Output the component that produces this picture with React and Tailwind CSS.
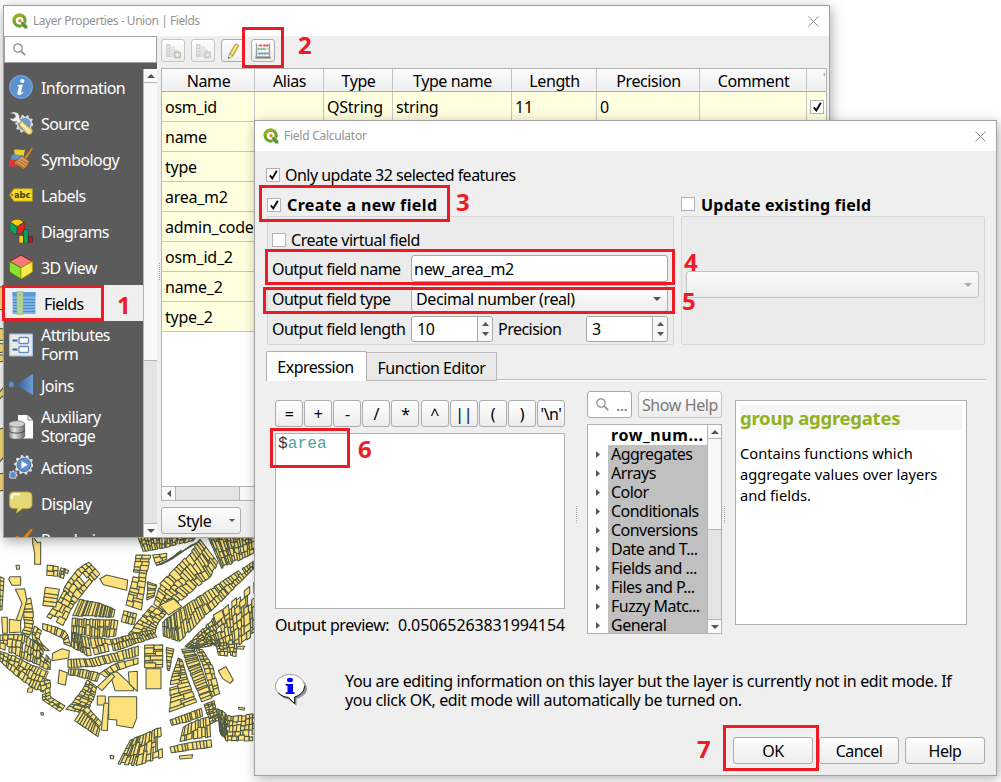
import React from "react";

/* ---------- Map canvas ---------- */

// Each band is a list of cross sections [ax, ay, bx, by]; it is cut into `n` lots and `rows` rows.
const BANDS = [
  { n: 20, rows: 3, s: [[412, 105, 430, 155], [500, 100, 500, 142], [600, 90, 580, 122]] },
  { n: 12, rows: 2, s: [[408, 165, 452, 166], [398, 230, 438, 236], [378, 315, 424, 330]] },
  { n: 9, rows: 2, s: [[458, 165, 500, 160], [470, 200, 500, 185], [520, 175, 545, 150], [575, 135, 600, 125]] },
  { n: 6, rows: 1, s: [[442, 245, 470, 255], [440, 300, 462, 290]] },
  { n: 30, rows: 3, s: [[600, 118, 655, 190], [575, 150, 628, 235], [530, 200, 590, 262], [480, 250, 545, 300], [462, 310, 500, 338], [425, 350, 470, 378], [385, 402, 465, 412]] },
  { n: 17, rows: 4, s: [[620, 100, 665, 205], [690, 100, 710, 185], [775, 100, 775, 152]] },
  { n: 40, rows: 2, s: [[488, 365, 490, 408], [530, 335, 540, 425], [580, 300, 605, 358], [640, 262, 668, 300], [700, 222, 722, 245], [768, 180, 768, 198]] },
  { n: 22, rows: 6, s: [[555, 440, 585, 446], [600, 395, 640, 436], [640, 355, 668, 450], [700, 300, 710, 440], [770, 240, 770, 400]] },
  { n: 6, rows: 3, s: [[650, 440, 655, 465], [710, 430, 708, 470]] },
  { n: 13, rows: 3, s: [[265, 185, 300, 222], [235, 205, 272, 252], [200, 250, 240, 290], [172, 305, 215, 325], [140, 350, 190, 377]] },
  { n: 2, rows: 2, s: [[142, 195, 140, 228], [175, 200, 172, 230]] },
  { n: 3, rows: 2, s: [[183, 202, 176, 230], [207, 210, 196, 238]] },
  { n: 1, rows: 5, s: [[136, 262, 126, 334], [178, 268, 164, 338]] },
  { n: 18, rows: 1, s: [[240, 298, 218, 348], [300, 310, 290, 350], [345, 328, 340, 352]] },
  { n: 17, rows: 2, s: [[217, 354, 215, 398], [280, 357, 278, 410], [354, 360, 346, 412]] },
  { n: 4, rows: 2, s: [[372, 332, 364, 365], [410, 342, 402, 375]] },
  { n: 32, rows: 2, s: [[215, 396, 214, 440], [250, 410, 262, 468], [340, 418, 348, 452], [400, 400, 412, 430], [455, 390, 470, 410]] },
  { n: 22, rows: 1, s: [[204, 478, 204, 502], [270, 476, 280, 500], [340, 460, 350, 485], [415, 438, 415, 468]] },
  { n: 12, rows: 1, s: [[206, 506, 205, 524], [250, 508, 246, 532], [300, 520, 290, 546]] },
  { n: 8, rows: 1, s: [[300, 520, 318, 532], [340, 492, 350, 512], [414, 474, 414, 492]] },
  { n: 10, rows: 1, s: [[128, 370, 128, 388], [170, 382, 165, 404], [200, 395, 190, 415], [214, 440, 192, 432]] },
  { n: 10, rows: 1, s: [[72, 300, 92, 294], [70, 340, 100, 340], [74, 380, 100, 385], [62, 405, 85, 412]] },
  { n: 16, rows: 3, s: [[0, 405, 0, 445], [70, 402, 60, 470], [110, 430, 100, 490], [152, 480, 150, 512]] },
  { n: 5, rows: 2, s: [[104, 378, 124, 392], [92, 412, 118, 425], [128, 450, 148, 452]] },
  { n: 15, rows: 3, s: [[0, 452, 0, 485], [60, 475, 40, 520], [110, 500, 84, 555], [155, 520, 128, 580]] },
  { n: 9, rows: 2, s: [[120, 545, 152, 540], [128, 600, 150, 590], [180, 635, 195, 618]] },
  { n: 11, rows: 3, s: [[262, 540, 290, 560], [235, 585, 280, 605], [198, 628, 255, 640]] },
  { n: 9, rows: 1, s: [[245, 630, 224, 662], [300, 685, 294, 710]] },
  { n: 5, rows: 1, s: [[262, 620, 250, 630], [305, 668, 298, 680]] },
  { n: 2, rows: 6, s: [[434, 436, 434, 503], [488, 433, 488, 503]] },
  { n: 8, rows: 1, s: [[498, 442, 522, 448], [500, 480, 514, 482], [502, 510, 508, 512]] },
  { n: 22, rows: 1, s: [[545, 448, 582, 445], [570, 520, 605, 505], [605, 605, 636, 594]] },
  { n: 11, rows: 2, s: [[586, 444, 608, 450], [612, 505, 638, 498], [636, 590, 660, 580]] },
  { n: 15, rows: 2, s: [[535, 474, 546, 480], [510, 545, 562, 535], [508, 636, 590, 606]] },
  { n: 12, rows: 1, s: [[510, 660, 515, 676], [560, 642, 565, 665], [604, 625, 608, 648]] },
  { n: 9, rows: 2, s: [[550, 680, 540, 725], [590, 660, 590, 715], [628, 650, 632, 712]] },
  { n: 11, rows: 1, s: [[510, 740, 514, 758], [570, 728, 574, 750], [633, 718, 635, 742]] },
  { n: 9, rows: 3, s: [[612, 614, 642, 602], [632, 672, 656, 660]] },
  { n: 14, rows: 5, s: [[652, 622, 660, 700], [690, 650, 680, 724], [770, 640, 770, 722]] },
  { n: 12, rows: 3, s: [[392, 718, 354, 792], [430, 704, 410, 797], [482, 680, 488, 772]] },
  { n: 1, rows: 7, s: [[0, 230, 0, 330], [12, 235, 6, 330]] },
];

const BUILDINGS = [
  "98,108 112,128 122,126 122,193 104,193 104,160 98,130",
  "48,196 58,196 58,208 50,208",
  "30,230 62,230 62,256 36,256 26,238",
  "46,268 74,266 80,300 70,340 60,370 48,362 66,310",
  "5,352 22,352 22,400 8,400",
  "28,358 62,362 62,396 28,398",
  "300,236 320,225 383,240 380,271 310,254",
  "480,315 520,296 545,320 505,345",
  "158,460 186,446 208,452 206,474 156,482",
  "178,510 202,518 196,556 174,550",
  "438,506 483,506 483,566 438,566",
  "292,588 316,588 316,615 292,615",
  "326,590 410,590 410,655 398,684 350,676 350,660 326,658",
  "312,610 326,610 322,692 304,690",
  "330,520 350,515 400,560 400,572 345,572",
  "292,560 335,520 344,530 306,572",
  "385,516 412,514 412,574 388,552",
  "655,512 678,500 700,540 690,550 668,536",
  "330,766 342,768 340,776 332,776",
  "538,768 578,764 576,774 540,777",
  "716,622 734,624 732,630 716,628",
  "710,440 734,438 730,448 712,446",
  "122,638 130,638 130,645 124,645",
  "84,565 100,562 96,577 82,576",
  "640,345 665,330 672,350 648,370",
  "-4,-640 12,-638 12,-572 -4,-570",
  "-4,-515 12,-513 12,-480 -4,-478",
  "-4,-470 12,-468 12,-444 -4,-442",
  "-4,-436 12,-434 12,-416 -4,-414",
  "-4,-320 12,-340 12,-316 -4,-300",
  "-4,-212 12,-216 12,-130 -4,-110",
  "-4,-78 12,-80 12,-30 -4,-26",
];

function lotsOf({ n, rows, s }, seed) {
  const at = (t) => {
    const p = Math.min(t * (s.length - 1), s.length - 1.0001);
    const i = Math.floor(p);
    const f = p - i;
    return s[i].map((v, k) => v + (s[i + 1][k] - v) * f);
  };
  const jitter = (a, b) => {
    const v = Math.sin(a * 127.1 + b * 311.7 + seed * 74.7) * 43758.5453;
    return v - Math.floor(v) - 0.5;
  };
  const out = [];
  for (let r = 0; r < rows; r++) {
    for (let i = 0; i < n; i++) {
      if (rows > 1 && jitter(i + 9, r + 5) > 0.46) continue;
      const t0 = i === 0 ? 0 : (i + jitter(i, r) * 0.75) / n;
      const t1 = i === n - 1 ? 1 : (i + 1 + jitter(i + 1, r) * 0.75) / n;
      const a = at(t0);
      const b = at(t1);
      const u0 = r === 0 ? Math.max(0, jitter(i, 30) * 0.12) : (r + jitter(i, r + 40) * 0.6) / rows;
      const u1 = r === rows - 1 ? 1 - Math.max(0, jitter(i, 31) * 0.16) : (r + 1 + jitter(i, r + 41) * 0.6) / rows;
      const pt = (q, u) => `${(q[0] + (q[2] - q[0]) * u).toFixed(1)},${(q[1] + (q[3] - q[1]) * u).toFixed(1)}`;
      out.push(`${pt(a, u0)} ${pt(b, u0)} ${pt(b, u1)} ${pt(a, u1)}`);
    }
  }
  return out;
}

function MapCanvas() {
  return (
    <svg className="block w-[260px] h-[502px]" viewBox="0 -660 780 1506" fill="#ffe17b" stroke="#4c5844" strokeWidth="3.2" strokeLinejoin="round">
      {BANDS.map((b, k) => lotsOf(b, k).map((p, i) => <polygon key={k + "-" + i} points={p} />))}
      {BUILDINGS.map((p) => <polygon key={p} points={p} />)}
    </svg>
  );
}

/* ---------- Icons ---------- */

const QgisLogo = () => (
  <svg className="w-4 h-4 shrink-0" viewBox="0 0 16 16">
    <circle cx="7.600" cy="7.600" r="5.500" fill="none" stroke="#6aa32e" strokeWidth="3.200" />
    <path d="M2.100 7.600a5.500 5.500 0 0 1 9.400-3.900" fill="none" stroke="#93b023" strokeWidth="3.200" />
    <path d="M8.800 8.800l2.400-.2 4.500 4.300v2.900h-3L8.800 12z" fill="#589632" stroke="#fff" strokeWidth=".5" />
    <circle cx="7.900" cy="7.700" r="2.100" fill="#f7d3ad" />
    <circle cx="8.100" cy="7.800" r="1.400" fill="#ee7913" />
  </svg>
);

const CloseX = () => (
  <svg className="w-[11px] h-[11px]" viewBox="0 0 11 11" stroke="#8b8b8b" strokeWidth="1" fill="none">
    <path d="M.5.5l10 10M10.500.5l-10 10" />
  </svg>
);

const Magnifier = () => (
  <svg className="w-[13px] h-[13px] shrink-0" viewBox="0 0 13 13" fill="none" stroke="#8c8c8c">
    <circle cx="5" cy="5" r="4.200" strokeWidth="1.200" />
    <path d="M8.200 8.200l4 4" strokeWidth="1.700" />
  </svg>
);

const gear = (cx, cy, r, teeth) =>
  Array.from({ length: teeth * 4 }, (_, i) => {
    const a = (i / (teeth * 4)) * Math.PI * 2;
    const q = i % 4 < 2 ? r : r * 0.8;
    return `${(cx + Math.cos(a) * q).toFixed(2)},${(cy + Math.sin(a) * q).toFixed(2)}`;
  }).join(" ");

const Icon = ({ children }) => (
  <svg className="w-6 h-6 shrink-0" viewBox="0 0 24 24">{children}</svg>
);

const InfoIcon = () => (
  <Icon>
    <circle cx="12" cy="12" r="11.900" fill="#5d92cf" />
    <circle cx="12" cy="12" r="11.300" fill="none" stroke="#82ace0" strokeWidth=".8" />
    <circle cx="13.400" cy="6" r="2.100" fill="#fff" />
    <path d="M8.300 10.200l5.600-.6-1.900 7.600c-.2.900.5.900 2-.5l.6.600c-1.600 1.900-3 2.700-4.600 2.600-1.500-.1-2-1.100-1.600-2.600l1.400-5.300c.2-.8-.4-.9-1.600-.9z" fill="#fff" />
  </Icon>
);
const SourceIcon = () => (
  <Icon>
    <polygon points={gear(15.500, 13, 9.300, 10)} fill="#dcdcdc" />
    <circle cx="15.500" cy="13" r="6.300" fill="#6d9bd1" />
    <path d="M.8 2.200c3-2.200 8-1.400 9.400 1.800.7 1.600.4 2.600 0 3.800l4.300 3.700-3 3.300-4-4.300C4.500 11.500 1.600 10 .9 7l3.300.8 2.300-2-.8-2.600z" fill="#f0f0f0" stroke="#666" strokeWidth=".6" />
    <path d="M10.500 11.800l2.800-1.800c3 3.500 8.500 7 10.500 9.600l-1.300 3.600-3.700.3-8.300-8.700z" fill="#ecd985" stroke="#8f7a26" strokeWidth=".7" />
    <path d="M12.500 12.800l8.300 8.200" stroke="#fbf5cf" strokeWidth="1.300" />
  </Icon>
);
const SymbologyIcon = () => (
  <Icon>
    <path d="M5 3c4-1.500 7 1 11-.5l-1.500 7H6z" fill="#f0cf2c" />
    <path d="M2.500 8c4-1.500 8 1 11.500-.5L12 13.500H2z" fill="#5c90cf" />
    <path d="M0 13c3-1.500 6 .5 9-.5l-1 7c-3 .5-5-1-8 0z" fill="#e2352f" />
    <path d="M22.800 .5l1.200 1-6.500 10.500-2.200-1.700z" fill="#d98a22" stroke="#8a560f" strokeWidth=".4" />
    <path d="M13 9l7 5c-.3 3.500-2.600 6-5.300 8L5 16z" fill="#cf9a5c" stroke="#87520f" strokeWidth=".6" />
    <path d="M7 15.800l8.500 5.200M9.300 14.100l8 5M11.500 12.500l7.500 4.500" stroke="#9f6418" strokeWidth=".8" />
  </Icon>
);
const LabelsIcon = () => (
  <Icon>
    <path d="M.5 12L5 5.800h18.300v12.400H5z" fill="#f7dc27" stroke="#b59c0b" strokeWidth=".8" />
    <circle cx="3" cy="12" r="1" fill="#5b5b5b" />
    <text x="5" y="15" fontSize="9.500" fontWeight="bold" fontFamily="DejaVu Sans" letterSpacing="0" textLength="16.500" lengthAdjust="spacingAndGlyphs" fill="#3b3b12">abc</text>
  </Icon>
);
const DiagramsIcon = () => (
  <Icon>
    <g stroke="#2c2c2c" strokeWidth=".5">
      <path d="M8.300 7.500L1.500 3.500a8 8 0 0 1 13 0z" fill="#fecb0a" />
      <path d="M8.300 7.500L1.500 3.500a8 8 0 0 0 6.300 12z" fill="#0fa15a" />
      <path d="M8.300 7.500l6.700-4a8 8 0 0 1-7 12z" fill="#d12a22" />
      <rect x="10" y="16.500" width="4.300" height="7.500" fill="#fecb0a" />
      <rect x="14.800" y="10.500" width="4.300" height="13.500" fill="#0fa15a" />
      <rect x="19.500" y="17.500" width="4.200" height="6.500" fill="#b81717" />
    </g>
  </Icon>
);
const CubeIcon = () => (
  <Icon>
    <g strokeWidth=".9" strokeLinejoin="round">
      <path d="M12 .2L23.400 6.500 12 12.800.6 6.500z" fill="#f47c7c" stroke="#a01414" />
      <path d="M.6 6.500L12 12.800V24L.6 17z" fill="#8be234" stroke="#3f8a08" />
      <path d="M23.400 6.500L12 12.800V24l11.400-7z" fill="#fce94f" stroke="#b99f07" />
    </g>
  </Icon>
);
const FieldsIcon = () => (
  <Icon>
    <rect x=".5" y="1" width="23" height="22" fill="#7fb3e4" />
    <rect x=".5" y="1" width="23" height="4.500" fill="#5a9ad6" />
    <path d="M1 8.500h22M1 11.500h22M1 14.500h22M1 17.500h22M1 20.500h22" stroke="#4a8aca" strokeWidth="1" />
    <rect x="5" y="0" width="6" height="24" fill="#b7d394" stroke="#94bb68" strokeWidth=".6" />
    <path d="M8 3v2M7.500 9h1M7.500 12h1M7.500 15h1" stroke="#6fa9c4" strokeWidth="1" />
  </Icon>
);
const FormIcon = () => (
  <Icon>
    <rect x="0" y=".5" width="24" height="23" rx="1" fill="#a8c1dd" />
    <rect x="1.200" y="1.700" width="21.600" height="20.600" fill="#e9e9e9" />
    <path d="M3.500 7.500h5M3.500 16.500h5" stroke="#44678f" strokeWidth="1.900" />
    <rect x="10" y="4.500" width="9.500" height="6" rx="1" fill="#fff" stroke="#5f8fc6" strokeWidth="1.300" />
    <rect x="10" y="13.500" width="9.500" height="6" rx="1" fill="#fff" stroke="#5f8fc6" strokeWidth="1.300" />
  </Icon>
);
const JoinsIcon = () => (
  <Icon>
    <defs>
      <linearGradient id="join" x1="0" x2="1"><stop offset="0" stopColor="#2f5c92" /><stop offset="1" stopColor="#6d9ed5" /></linearGradient>
    </defs>
    <circle cx="2.200" cy="11.500" r="2.700" fill="#5d8fca" />
    <path d="M7 11.500L24 .8v21.400z" fill="url(#join)" />
  </Icon>
);
const StorageIcon = () => (
  <Icon>
    <defs>
      <linearGradient id="cyl" x1="0" x2="1"><stop offset="0" stopColor="#7a7a7a" /><stop offset=".35" stopColor="#e6e6e6" /><stop offset="1" stopColor="#6a6a6a" /></linearGradient>
    </defs>
    <path d="M9 0h10l5 5v18.500H9z" fill="#fdfdfd" />
    <path d="M19 0v5h5z" fill="#fff" stroke="#666" strokeWidth=".8" />
    <path d="M-.3 9v12c0 4.500 16 4.500 16 0V9z" fill="url(#cyl)" stroke="#4e4e4e" strokeWidth=".6" />
    <ellipse cx="7.700" cy="9" rx="8" ry="3.200" fill="#cfcfcf" stroke="#555" strokeWidth=".6" />
    <path d="M-.3 15c0 4.200 16 4.200 16 0" fill="none" stroke="#4e4e4e" />
  </Icon>
);
const ActionsIcon = () => (
  <Icon>
    <polygon points={gear(15, 9.800, 10, 10)} fill="#e3e3e3" />
    <circle cx="15" cy="9.800" r="6.800" fill="#5b8fcd" stroke="#3b5f8c" strokeWidth=".8" />
    <path d="M12.500 6l6.300 3.800-6.300 3.800z" fill="#fff" />
    <polygon points={gear(4, 20, 4.800, 8)} fill="#c9c9c9" />
    <circle cx="4" cy="20" r="2.900" fill="#5b8fcd" />
  </Icon>
);
const DisplayIcon = () => (
  <Icon>
    <path d="M4.500 1h14.500a4 4 0 0 1 4 4v8.500a4 4 0 0 1-4 4h-5.500L7.500 22l1-4.500h-4a4 4 0 0 1-4-4V5a4 4 0 0 1 4-4z" fill="#e6d877" stroke="#bba93b" strokeWidth=".9" />
    <path d="M3 8V5.500C3 4 4 3.300 5 3.300h6" stroke="#fffbe0" strokeWidth="2" fill="none" />
  </Icon>
);
const RenderingIcon = () => (
  <Icon>
    <path d="M6 10.500l2.800-2.200 3.200 4L22 1.500l2 1.200-10 14H10z" fill="#dd8a1c" stroke="#8f5607" strokeWidth=".5" />
  </Icon>
);

const NewFieldIcon = ({ del }) => (
  <svg className="w-4 h-4" viewBox="0 0 16 16" opacity=".7">
    <rect x="1" y="1" width="4.500" height="13" fill="#c6c6c6" />
    <path d="M2 4h2.500M2 7h2.500M2 10h2.500" stroke="#f2f2f2" />
    <path d="M5.500 3.500H10v3h3V14H5.500z" fill="#d6d6d6" />
    <path d="M6.500 6h3M6.500 9h3" stroke="#efefef" />
    <rect x="9" y="8.500" width="7" height="7" rx="1" fill={del ? "#c6bcbe" : "#acac9c"} />
    <path d={del ? "M11 10.500l3 3M14 10.500l-3 3" : "M12.500 9.800v4.400M10.300 12h4.400M11 10.500l3 3M14 10.500l-3 3"} stroke="#fff" />
  </svg>
);
const PencilIcon = () => (
  <svg className="w-4 h-4" viewBox="0 0 16 16">
    <path d="M10.300 1.200l3.300 1.700-5.700 10-3.400-1.900z" fill="#ecd23c" stroke="#8e7a14" strokeWidth=".7" />
    <path d="M12 1.900L6.200 12" stroke="#fff4a6" strokeWidth="1" />
    <path d="M4.500 11l3.400 1.900-4.700 2.900z" fill="#f5e5c8" stroke="#86764c" strokeWidth=".5" />
    <path d="M3.600 14l1 .7-1.500 1z" fill="#222" />
    <path d="M10.300 1.200l.9-1 2.800 1.500-.4 1.200z" fill="#b6b6b6" />
  </svg>
);
const AbacusIcon = () => (
  <svg className="w-4 h-4" viewBox="0 0 16 16">
    <path d="M1.500 .5v13M14.500 .5v13" stroke="#9a9a9a" strokeWidth="1.300" />
    <path d="M1 2.500h14M1 6h14M1 10.500h14" stroke="#b0b0b0" strokeWidth=".8" />
    <path d="M.3 14.500h15.400" stroke="#858585" strokeWidth="2.200" />
    <g fill="#e05a5e"><circle cx="5.500" cy="2.500" r="1.300" /><circle cx="9.500" cy="2.500" r="1.300" /><circle cx="12.300" cy="2.500" r="1.300" /></g>
    <g fill="#7cc487"><circle cx="3.800" cy="6" r="1.200" /><circle cx="6.500" cy="6" r="1.200" /><circle cx="9.200" cy="6" r="1.200" /></g>
    <g fill="#6f9cbc"><circle cx="4.500" cy="10.500" r="1.300" /><circle cx="7.400" cy="10.500" r="1.300" /><circle cx="10.300" cy="10.500" r="1.300" /><circle cx="12.900" cy="10.500" r="1.100" /></g>
  </svg>
);
const BalloonIcon = () => (
  <svg className="mt-[2px] w-8 h-8 shrink-0" viewBox="0 0 32 32">
    <path d="M17 3.500c8 0 15 5 15 11 0 5-4.500 8.500-10.500 10.500v7L14 25.500C6 24 3.500 20 3.500 14.500 3.500 8 9 3.500 17 3.500z" fill="#909090" />
    <path d="M15 .5C23 .5 29.500 5.500 29.500 12c0 5.200-4 9.400-9.800 11v6.700l-6.200-6.200C6 23 .5 18.500 .5 12.500.5 5.500 7 .5 15 .5z" fill="#fff" stroke="#9a9a9a" />
    <path d="M29.500 12c0 5.200-4 9.400-9.800 11v6.700l-6.200-6.200c-4-.2-7.500-2-10-4.600" fill="none" stroke="#111" />
    <ellipse cx="15" cy="6" rx="3" ry="2.200" fill="#00f" />
    <path d="M10.700 10h7.300v8.300h1.700V20H10.700v-1.700h1.800v-6.600h-1.800z" fill="#00f" />
  </svg>
);

/* ---------- Small controls ---------- */

const ARROWS = {
  up: "M0 5L4.500 0 9 5z",
  down: "M0 0h9L4.500 5z",
  left: "M5 0v9L0 4.500z",
  right: "M0 0l5 4.500L0 9z",
};
const Arrow = ({ dir, className = "w-[9px] h-[5px]", color = "#555" }) => (
  <svg className={`${className} shrink-0`} viewBox={dir === "left" || dir === "right" ? "0 0 5 9" : "0 0 9 5"} preserveAspectRatio="none">
    <path d={ARROWS[dir]} fill={color} />
  </svg>
);

const Check = ({ checked, className = "" }) => (
  <span className={`flex w-[14px] h-[14px] shrink-0 items-center justify-center border border-[#b4b4b4] bg-white ${className}`}>
    {checked && (
      <svg className="w-[9px] h-[10px]" viewBox="0 0 9 10" fill="none" stroke="#111" strokeWidth="2">
        <path d="M.8 5.400l2.500 3L7.800.8" />
      </svg>
    )}
  </span>
);

const BTN = "flex shrink-0 items-center justify-center rounded-[3px] border border-[#acacac] bg-gradient-to-b from-[#fefefe] to-[#ededed]";

const Button = ({ className = "", children }) => <button className={`${BTN} ${className}`}>{children}</button>;

const Spin = ({ value, className }) => (
  <div className={`flex h-[26px] shrink-0 rounded-[3px] border border-[#a8a8a8] bg-white ${className}`}>
    <span className="flex flex-1 items-center pl-[5px]">{value}</span>
    <span className="flex w-[15px] flex-col items-center justify-between rounded-r-[3px] border-l border-[#a8a8a8] bg-[#f7f7f7] py-[5px]">
      <Arrow dir="up" className="w-[7px] h-[4px]" />
      <Arrow dir="down" className="w-[7px] h-[4px]" />
    </span>
  </div>
);

const Dots = ({ className = "" }) => (
  <span className={`h-[17px] w-0 border-l border-dotted border-[#a8a8a8] ${className}`} />
);

/* ---------- Layer properties window ---------- */

const NAV = [
  { label: "Information", icon: InfoIcon },
  { label: "Source", icon: SourceIcon },
  { label: "Symbology", icon: SymbologyIcon },
  { label: "Labels", icon: LabelsIcon },
  { label: "Diagrams", icon: DiagramsIcon },
  { label: "3D View", icon: CubeIcon },
  { label: "Fields", icon: FieldsIcon, active: true },
  { label: "Attributes Form", icon: FormIcon, tall: true },
  { label: "Joins", icon: JoinsIcon },
  { label: "Auxiliary Storage", icon: StorageIcon, tall: true },
  { label: "Actions", icon: ActionsIcon },
  { label: "Display", icon: DisplayIcon },
  { label: "Rendering", icon: RenderingIcon },
];

const GRID = "grid grid-cols-[93px_69px_69px_119px_85px_103px_107px_19px]";
const HEAD = ["Name", "Alias", "Type", "Type name", "Length", "Precision", "Comment"];
const FIELDS = ["name", "type", "area_m2", "admin_code", "osm_id_2", "name_2", "type_2"];

function LayerProperties() {
  return (
    <section className="absolute left-[3px] top-[5px] flex h-[533px] w-[827px] flex-col overflow-hidden border border-[#a0a0a0] bg-[#efefef]">
      <header className="flex h-[30px] shrink-0 items-center justify-between bg-white pl-[8px] pr-[10px]">
        <div className="flex items-center gap-[5px]">
          <QgisLogo />
          <span className="text-[12px] tracking-[-0.45px] text-[#949494]">Layer Properties - Union | Fields</span>
        </div>
        <CloseX />
      </header>

      <div className="flex min-h-0 flex-1">
        <aside className="flex w-[153px] shrink-0 flex-col bg-[#5b5b5b]">
          <div className="flex h-[27px] shrink-0 items-center border border-[#a0a0a0] bg-white pl-[8px]">
            <Magnifier />
          </div>
          <div className="mt-[6px] flex min-h-0 flex-1">
            <nav className="flex min-w-0 flex-1 flex-col overflow-hidden tracking-[-0.58px]">
              {NAV.map(({ label, icon: I, active, tall }) => (
                <div
                  key={label}
                  className={`flex shrink-0 items-center pl-[5px] ${tall ? "h-[46px] pt-px" : "h-9"} ${active ? "gap-[8px] bg-[#efefef] pl-[8px] text-black" : "gap-[8px] text-white"}`}
                >
                  <I />
                  <span className={`w-[84px] leading-[19px] ${tall ? "" : "pt-[3px]"}`}>{label}</span>
                </div>
              ))}
            </nav>
            <div className="flex w-[14px] shrink-0 flex-col border-l border-[#b5b5b5] bg-[#e4e4e4]">
              <div className="flex h-[14px] items-center justify-center border-b border-[#b5b5b5] bg-[#fafafa]"><Arrow dir="up" className="w-[8px] h-[4px]" /></div>
              <div className="h-[278px] border-b border-[#b5b5b5] bg-[#f8f8f8]" />
              <div className="flex-1" />
              <div className="flex h-[14px] items-center justify-center border-t border-[#b5b5b5] bg-[#fafafa]"><Arrow dir="down" className="w-[8px] h-[4px]" /></div>
            </div>
          </div>
        </aside>

        <div className="flex w-[4px] shrink-0 items-center justify-center"><Dots className="mb-[30px]" /></div>

        <main className="flex min-w-0 flex-1 flex-col pr-[2px]">
          <div className="flex h-[32px] shrink-0 gap-[6px] pt-[3px]">
            <Button className="h-[23px] w-[24px] border-[#c6c6c6]"><NewFieldIcon /></Button>
            <Button className="h-[23px] w-[24px] border-[#c6c6c6]"><NewFieldIcon del /></Button>
            <Button className="h-[23px] w-[24px]"><PencilIcon /></Button>
            <Button className="h-[23px] w-[24px]"><AbacusIcon /></Button>
          </div>

          <div className="flex h-[433px] shrink-0 flex-col border border-[#b4b4b4] bg-white tracking-[-0.25px]">
            <div className={`${GRID} h-[23px] shrink-0 border-b border-[#acacac] bg-gradient-to-b from-[#fcfcfc] to-[#eeeeee] tracking-[-0.4px]`}>
              {HEAD.map((h) => (
                <span key={h} className="flex items-center justify-center whitespace-nowrap border-r border-[#c4c4c4] pl-px pt-px">{h}</span>
              ))}
              <span className="pl-[16px] text-[12px] leading-[18px] text-[#c8861c]">'</span>
            </div>
            <div className={`${GRID} h-[30px] shrink-0 bg-[#ffffdf]`}>
              {["osm_id", "", "QString", "string", "11", "0", ""].map((v, i) => (
                <span key={i} className="flex items-center border-b border-r border-[#c6c6c6] pl-[3px]">{v}</span>
              ))}
              <span className="flex items-center pl-[3px]"><Check checked /></span>
            </div>
            {FIELDS.map((f) => (
              <div key={f} className="flex h-[30px] shrink-0 items-center whitespace-nowrap border-b border-[#c6c6c6] bg-[#ffffdf] pl-[3px]">{f}</div>
            ))}
            <div className="flex-1" />
            <div className="flex h-[14px] shrink-0 border-t border-[#b5b5b5] bg-[#e4e4e4]">
              <div className="flex w-[14px] items-center justify-center border-r border-[#b5b5b5] bg-[#fafafa]"><Arrow dir="left" className="w-[4px] h-[7px]" /></div>
              <div className="w-[64px] border-r border-[#b5b5b5]" />
              <div className="flex-1 bg-[#f8f8f8]" />
            </div>
          </div>

          <Button className="mt-[6px] h-[27px] w-[80px] gap-[18px] pl-[11px] tracking-[-0.4px]">
            <span>Style</span>
            <Arrow dir="down" className="w-[6px] h-[3px]" />
          </Button>
        </main>
      </div>
    </section>
  );
}

/* ---------- Field calculator window ---------- */

const OPERATORS = ["=", "+", "-", "/", "*", "^", "||", "(", ")", "'\\n'"];
const GROUPS = ["Aggregates", "Arrays", "Color", "Conditionals", "Conversions", "Date and T...", "Fields and ...", "Files and P...", "Fuzzy Matc...", "General"];

function NewFieldForm() {
  return (
    <div className="flex w-[407px] flex-col">
      <label className="flex h-[20px] items-center font-bold">
        <Check checked className="mb-[3px]" />
        <span className="mb-[2px] ml-[6px] tracking-[0.38px]">Create a new field</span>
      </label>
      <div className="flex h-[129px] flex-col rounded-[2px] border border-[#d6d6d6] bg-[#ebebeb] pl-[4px]">
        <div className="mt-[13px] flex h-[20px] items-center gap-[5px]"><Check /><span className="tracking-[-0.45px]">Create virtual field</span></div>
        <div className="mt-[5px] flex h-[27px] items-center">
          <span className="w-[139px] whitespace-nowrap">Output field name</span>
          <span className="flex h-[27px] w-[257px] items-center rounded-[3px] border border-[#a8a8a8] bg-white pl-[2px] tracking-[-0.25px]">new_area_m2</span>
        </div>
        <div className="mt-[3px] flex h-[27px] items-center">
          <span className="w-[139px] whitespace-nowrap">Output field type</span>
          <span className={`${BTN} h-[27px] w-[257px] !justify-between pl-[4px] pr-[6px] tracking-[-0.4px]`}>
            Decimal number (real)<Arrow dir="down" className="w-[8px] h-[4px]" />
          </span>
        </div>
        <div className="mt-[4px] flex h-[26px] items-center">
          <span className="w-[139px] whitespace-nowrap">Output field length</span>
          <Spin value="10" className="w-[82px]" />
          <span className="ml-[5px] w-[88px]">Precision</span>
          <Spin value="3" className="w-[82px]" />
        </div>
      </div>
    </div>
  );
}

function UpdateFieldForm() {
  return (
    <div className="flex w-[304px] flex-col">
      <label className="flex h-[20px] items-center font-bold">
        <Check className="mb-[4px]" />
        <span className="mb-[2px] ml-[6px] tracking-[0.22px]">Update existing field</span>
      </label>
      <div className="flex h-[129px] flex-col rounded-[2px] border border-[#d6d6d6] bg-[#ebebeb] px-[4px] pr-[5px]">
        <div className="mt-[54px] flex h-[27px] items-center justify-end rounded-[3px] border border-[#c3c3c3] bg-gradient-to-b from-[#fafafa] to-[#ededed] pr-[6px]">
          <Arrow dir="down" className="w-[8px] h-[4px]" color="#aaa" />
        </div>
      </div>
    </div>
  );
}

function ExpressionBuilder() {
  return (
    <div className="flex h-[263px] pl-[9px] pt-[10px]">
      <div className="flex w-[290px] flex-col pt-[9px]">
        <div className="flex justify-between">
          {OPERATORS.map((o) => (
            <Button key={o} className="h-[27px] w-[28px] text-[16px]">{o}</Button>
          ))}
        </div>
        <div className="mt-[6px] h-[176px] border border-[#b0b0b0] bg-white pl-[2px] pt-[2px] font-['Liberation_Mono'] text-[16px] leading-[17px] tracking-[0.15px]">
          <span className="text-[#333]">$</span><span className="text-[#4aa5a5]">area</span>
        </div>
        <div className="mt-[6px] flex h-[20px] items-center justify-between whitespace-nowrap">
          <span className="tracking-[-0.42px]">Output preview:</span><span className="tracking-[-0.1px]">0.05065263831994154</span>
        </div>
      </div>
      <div className="flex w-[22px] items-center justify-center"><Dots className="mb-[6px]" /></div>
      <div className="flex w-[135px] flex-col">
        <div className="flex justify-between">
          <div className="flex h-[27px] w-[45px] items-center gap-[7px] rounded-[3px] border border-[#a8a8a8] bg-white pl-[8px] text-[#777]"><Magnifier /><span>...</span></div>
          <Button className="h-[27px] w-[84px] whitespace-nowrap border-[#c3c3c3] text-[#7a7a7a]"><span className="tracking-[-0.4px]">Show Help</span></Button>
        </div>
        <div className="mt-[6px] flex h-[210px] overflow-hidden border border-[#b0b0b0] bg-white">
          <div className="flex min-w-0 flex-1 flex-col overflow-hidden">
            <div className="flex h-[20px] shrink-0 items-center whitespace-nowrap pl-[23px] font-bold tracking-[0.6px]">row_num...</div>
            {GROUPS.map((g) => (
              <div key={g} className="flex h-[19px] shrink-0 items-center">
                <span className="flex w-[20px] items-center pl-[8px]"><Arrow dir="right" className="w-[4px] h-[7px]" /></span>
                <span className="flex h-[19px] flex-1 items-center whitespace-nowrap bg-[#c0c0c0] pl-[3px] leading-[19px]">{g}</span>
              </div>
            ))}
          </div>
          <div className="flex w-[14px] shrink-0 flex-col border-l border-[#b5b5b5] bg-[#e4e4e4]">
            <div className="flex h-[14px] items-center justify-center border-b border-[#b5b5b5] bg-[#fafafa]"><Arrow dir="up" className="w-[8px] h-[4px]" /></div>
            <div className="h-[91px] border-b border-[#b5b5b5] bg-[#f8f8f8]" />
            <div className="flex-1" />
            <div className="flex h-[14px] items-center justify-center border-t border-[#b5b5b5] bg-[#fafafa]"><Arrow dir="down" className="w-[8px] h-[4px]" /></div>
          </div>
        </div>
      </div>
      <div className="flex w-[13px] items-center pl-[2px]"><Dots className="mb-[6px]" /></div>
      <article className="mt-[9px] h-[225px] w-[232px] border border-[#b0b0b0] bg-white px-[4px] pt-[4px]">
        <h2 className="flex h-[25px] items-center bg-[#f5f5f5] text-[18.500px] font-bold tracking-[-0.25px] text-[#93b023]">group aggregates</h2>
        <p className="mt-[13px] whitespace-nowrap text-[14.700px] leading-[21px] tracking-[-0.02px]">Contains functions which<br />aggregate values over layers<br />and fields.</p>
      </article>
    </div>
  );
}

function FieldCalculator() {
  return (
    <section className="absolute left-[254px] top-[120px] flex h-[656px] w-[743px] flex-col border border-[#a0a0a0] bg-[#efefef] tracking-[-0.52px] shadow-[2px_3px_12px_rgba(0,0,0,0.3)]">
      <header className="flex h-[30px] shrink-0 items-center justify-between bg-white pl-[8px] pr-[10px]">
        <div className="flex items-center gap-[5px]">
          <QgisLogo />
          <span className="text-[12px] tracking-[-0.25px] text-[#949494]">Field Calculator</span>
        </div>
        <CloseX />
      </header>

      <div className="flex flex-1 flex-col pl-[11px]">
        <label className="mt-[14px] flex h-[20px] items-center gap-[5px]"><Check checked /><span>Only update 32 selected features</span></label>
        <div className="mt-[11px] flex gap-[7px] pl-px">
          <NewFieldForm />
          <UpdateFieldForm />
        </div>

        <div className="mt-[6px] flex w-[720px] items-end">
          <div className="flex h-[30px] w-[101px] items-center justify-center rounded-t-[2px] border border-b-0 border-[#b0b0b0] bg-white pr-[2px]">Expression</div>
          <div className="flex h-[29px] w-[130px] items-center justify-center whitespace-nowrap border border-l-0 border-[#b9b9b9] bg-[#e9e9e9] pt-[2px] tracking-[-0.42px]">Function Editor</div>
          <div className="h-[2px] flex-1 border-t border-[#bdbdbd] bg-white" />
        </div>

        <ExpressionBuilder />

        <div className="mt-[28px] flex h-[38px] pl-[9px]">
          <BalloonIcon />
          <p className="ml-[38px] whitespace-nowrap leading-[19px] tracking-[-0.35px]">
            You are editing information on this layer but the layer is currently not in edit mode. If<br />
            you click OK, edit mode will automatically be turned on.
          </p>
        </div>

        <div className="mt-[27px] flex justify-end gap-[6px] pr-[11px]">
          <Button className="h-[27px] w-[80px] border-[#8f8f8f]">OK</Button>
          <Button className="h-[27px] w-[80px]">Cancel</Button>
          <Button className="h-[27px] w-[80px]">Help</Button>
        </div>
      </div>
    </section>
  );
}

/* ---------- Step markers ---------- */

const STEPS = [
  { n: 1, box: "left-[2px] top-[285px] w-[102px] h-[36px]", num: "left-[117px] top-[290px]" },
  { n: 2, box: "left-[242px] top-[27px] w-[42px] h-[41px]", num: "left-[298px] top-[30px]" },
  { n: 3, box: "left-[259px] top-[185px] w-[191px] h-[37px]", num: "left-[456px] top-[187px]" },
  { n: 4, box: "left-[265px] top-[249px] w-[410px] h-[36px]", num: "left-[684px] top-[247px]" },
  { n: 5, box: "left-[263px] top-[287px] w-[412px] h-[27px]", num: "left-[682px] top-[286px]" },
  { n: 6, box: "left-[270px] top-[428px] w-[80px] h-[40px]", num: "left-[358px] top-[434px]" },
  { n: 7, box: "left-[723px] top-[725px] w-[96px] h-[46px]", num: "left-[697px] top-[734px]" },
];

export default function App() {
  return (
    <div className="relative h-[782px] w-[1001px] overflow-hidden bg-white font-['Noto_Sans',sans-serif] text-[16px] leading-[20px] text-black">
      <div className="flex h-full items-end"><MapCanvas /></div>
      <div className="absolute left-[3px] top-[5px] h-[533px] w-[827px] shadow-[1px_3px_12px_rgba(0,0,0,0.35)]" />
      <LayerProperties />
      <FieldCalculator />
      {STEPS.map(({ n, box, num }) => (
        <React.Fragment key={n}>
          <div className={`absolute border-[3px] border-[#ed1c24] ${box}`} />
          <span className={`absolute text-[24px] font-bold leading-[30px] text-[#ed1c24] ${num}`}>{n}</span>
        </React.Fragment>
      ))}
    </div>
  );
}
